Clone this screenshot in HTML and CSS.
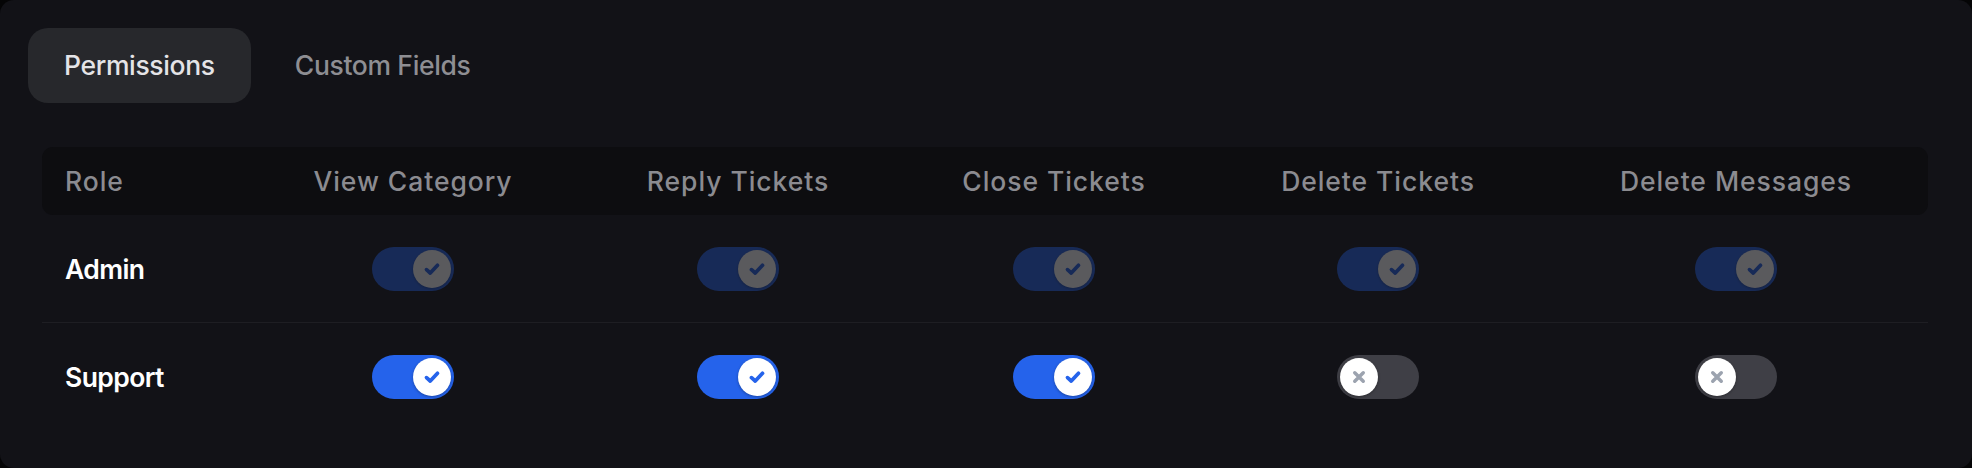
FILE: index.html
```html
<!DOCTYPE html>
<html lang="en">
<head>
<meta charset="utf-8">
<title>Permissions</title>
<link rel="stylesheet" href="styles.css">
</head>
<body>
<div class="card">
  <div class="tabs">
    <div class="tab active">Permissions</div>
    <div class="tab">Custom Fields</div>
  </div>
  <div class="table">
    <div class="row head">
      <div class="cell role">Role</div>
      <div class="cell">View Category</div>
      <div class="cell">Reply Tickets</div>
      <div class="cell">Close Tickets</div>
      <div class="cell">Delete Tickets</div>
      <div class="cell">Delete Messages</div>
    </div>
    <div class="row body sep">
      <div class="cell role name">Admin</div>
      <div class="cell"><span class="toggle on disabled"><span class="knob"><svg viewBox="0 0 16 16" class="ico"><path d="M3.6 8.5 L6.6 11.2 L12.4 5" /></svg></span></span></div>
      <div class="cell"><span class="toggle on disabled"><span class="knob"><svg viewBox="0 0 16 16" class="ico"><path d="M3.6 8.5 L6.6 11.2 L12.4 5" /></svg></span></span></div>
      <div class="cell"><span class="toggle on disabled"><span class="knob"><svg viewBox="0 0 16 16" class="ico"><path d="M3.6 8.5 L6.6 11.2 L12.4 5" /></svg></span></span></div>
      <div class="cell"><span class="toggle on disabled"><span class="knob"><svg viewBox="0 0 16 16" class="ico"><path d="M3.6 8.5 L6.6 11.2 L12.4 5" /></svg></span></span></div>
      <div class="cell"><span class="toggle on disabled"><span class="knob"><svg viewBox="0 0 16 16" class="ico"><path d="M3.6 8.5 L6.6 11.2 L12.4 5" /></svg></span></span></div>
    </div>
    <div class="row body">
      <div class="cell role name">Support</div>
      <div class="cell"><span class="toggle on"><span class="knob"><svg viewBox="0 0 16 16" class="ico"><path d="M3.6 8.5 L6.6 11.2 L12.4 5" /></svg></span></span></div>
      <div class="cell"><span class="toggle on"><span class="knob"><svg viewBox="0 0 16 16" class="ico"><path d="M3.6 8.5 L6.6 11.2 L12.4 5" /></svg></span></span></div>
      <div class="cell"><span class="toggle on"><span class="knob"><svg viewBox="0 0 16 16" class="ico"><path d="M3.6 8.5 L6.6 11.2 L12.4 5" /></svg></span></span></div>
      <div class="cell"><span class="toggle off"><span class="knob"><svg viewBox="0 0 16 16" class="ico x"><path d="M4.6 4.6 L11.4 11.4 M11.4 4.6 L4.6 11.4" /></svg></span></span></div>
      <div class="cell"><span class="toggle off"><span class="knob"><svg viewBox="0 0 16 16" class="ico x"><path d="M4.6 4.6 L11.4 11.4 M11.4 4.6 L4.6 11.4" /></svg></span></span></div>
    </div>
  </div>
</div>
</body>
</html>
```
FILE: styles.css
```css
* { box-sizing: border-box; }
html, body { margin: 0; padding: 0; }
body {
  background: #050506;
  font-family: Inter, "Noto Sans", "Liberation Sans", sans-serif;
  font-size: 26.5px;
}
.card {
  width: 1972px;
  height: 468px;
  background: #121217;
  border-radius: 14px;
  padding: 28px 44px 0 28px;
}
.tabs {
  display: flex;
  gap: 8px;
}
.tab {
  height: 75px;
  line-height: 75px;
  padding: 0 36px;
  border-radius: 20px;
  color: #8e8e93;
  font-weight: 450;
  letter-spacing: -0.35px;
}
.tab.active {
  background: #27282c;
  color: #e4e4e7;
}
.table {
  margin: 44px 0 0 14px;
}
.row {
  display: grid;
  grid-template-columns: 204px 334px 316px 316px 332px 384px;
  align-items: center;
}
.row.head {
  height: 68px;
  background: #0d0d10;
  border-radius: 11px;
  color: #8b8b90;
  font-weight: 450;
  letter-spacing: 0.95px;
}
.row.body {
  height: 107px;
}
.row.sep {
  border-bottom: 1px solid #1e1e23;
  height: 108px;
}
.cell {
  text-align: center;
  display: flex;
  justify-content: center;
  align-items: center;
}
.cell.role {
  justify-content: flex-start;
  padding-left: 23px;
}
.cell.name {
  color: #ffffff;
  font-weight: 600;
  letter-spacing: -0.6px;
}
.toggle {
  width: 82px;
  height: 44px;
  border-radius: 22px;
  padding: 3px;
  display: flex;
  align-items: center;
}
.toggle.on {
  background: #2563eb;
  justify-content: flex-end;
}
.toggle.off {
  background: #3f3f46;
  justify-content: flex-start;
}
.toggle.disabled {
  opacity: 0.3;
}
.knob {
  width: 38px;
  height: 38px;
  border-radius: 50%;
  background: #ffffff;
  display: flex;
  align-items: center;
  justify-content: center;
  box-shadow: 0 1px 3px rgba(0, 0, 0, 0.3);
}
.ico {
  width: 20px;
  height: 20px;
  fill: none;
  stroke: #2563eb;
  stroke-width: 3;
  stroke-linecap: round;
  stroke-linejoin: round;
}
.ico.x {
  stroke: #9ca3af;
  stroke-width: 2.8;
}
```
